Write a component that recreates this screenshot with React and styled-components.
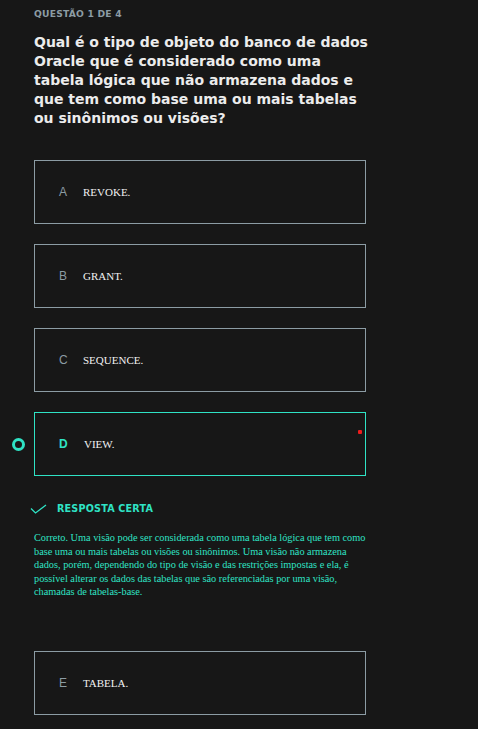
import React from 'react'
import styled, { createGlobalStyle } from 'styled-components'

const teal = '#2fe3c5'
const muted = '#8c9ca4'

const GlobalStyle = createGlobalStyle`
  html, body {
    margin: 0;
    padding: 0;
    background: #171717;
  }
  body {
    font-family: "DejaVu Sans", "Liberation Sans", sans-serif;
  }
`

const Page = styled.div`
  width: 478px;
  min-height: 729px;
  background: #171717;
  padding: 7px 0 0 34px;
  box-sizing: border-box;
`

const Counter = styled.div`
  font-size: 9.2px;
  font-weight: 600;
  color: ${muted};
  letter-spacing: 0.2px;
  line-height: 13px;
`

const Question = styled.h1`
  margin: 13px 0 0;
  font-size: 14px;
  line-height: 19px;
  font-weight: 700;
  color: #ececec;
`

const Options = styled.div`
  display: flex;
  flex-direction: column;
  gap: 20px;
  margin-top: ${(p) => p.$top}px;
  width: 332px;
`

const OptionBox = styled.div`
  position: relative;
  height: 64px;
  box-sizing: border-box;
  border: 1px solid ${(p) => (p.$selected ? teal : muted)};
  display: flex;
  align-items: center;
  padding-left: 24px;
`

const Letter = styled.span`
  width: 24px;
  font-family: "Liberation Sans", Arial, sans-serif;
  font-size: 12px;
  font-weight: ${(p) => (p.$selected ? 700 : 400)};
  color: ${(p) => (p.$selected ? teal : muted)};
  margin-right: ${(p) => (p.$selected ? 1 : 0)}px;
`

const OptionText = styled.span`
  font-family: "Liberation Serif", "Times New Roman", serif;
  font-size: 11px;
  color: #f2f2f2;
`

const Radio = styled.span`
  position: absolute;
  left: -23px;
  top: 50%;
  width: 13px;
  height: 13px;
  margin-top: -6px;
  box-sizing: border-box;
  border-radius: 50%;
  border: 3.5px solid ${teal};
`

const RedDot = styled.span`
  position: absolute;
  right: 3px;
  top: 17px;
  width: 4px;
  height: 4px;
  border-radius: 1px;
  background: #ee1c1c;
`

const Feedback = styled.div`
  margin-top: 27px;
  width: 332px;
`

const FeedbackHead = styled.div`
  display: flex;
  align-items: center;
  gap: 10px;
  margin-left: -4px;
  font-size: 9.6px;
  font-weight: 700;
  letter-spacing: 0.2px;
  color: ${teal};
`

const Explanation = styled.p`
  margin: 17px 0 0;
  font-family: "Liberation Serif", "Times New Roman", serif;
  font-size: 10.3px;
  line-height: 13.6px;
  color: ${teal};
`

const Check = () => (
  <svg width="17" height="10" viewBox="0 0 17 10" fill="none">
    <path d="M1 4.5 L5.5 9 L16 1" stroke={teal} strokeWidth="1.3" />
  </svg>
)

const options = [
  { letter: 'A', text: 'REVOKE.' },
  { letter: 'B', text: 'GRANT.' },
  { letter: 'C', text: 'SEQUENCE.' },
  { letter: 'D', text: 'VIEW.', selected: true },
]

const Option = ({ letter, text, selected }) => (
  <OptionBox $selected={selected}>
    {selected && <Radio />}
    <Letter $selected={selected}>{letter}</Letter>
    <OptionText>{text}</OptionText>
    {selected && <RedDot />}
  </OptionBox>
)

export default function App() {
  return (
    <Page>
      <GlobalStyle />
      <Counter>QUESTÃO 1 DE 4</Counter>
      <Question>
        Qual é o tipo de objeto do banco de dados
        <br />
        Oracle que é considerado como uma
        <br />
        tabela lógica que não armazena dados e
        <br />
        que tem como base uma ou mais tabelas
        <br />
        ou sinônimos ou visões?
      </Question>
      <Options $top={32}>
        {options.map((o) => (
          <Option key={o.letter} {...o} />
        ))}
      </Options>
      <Feedback>
        <FeedbackHead>
          <Check />
          RESPOSTA CERTA
        </FeedbackHead>
        <Explanation>
          Correto. Uma visão pode ser considerada como uma tabela lógica que tem como base uma ou
          mais tabelas ou visões ou sinônimos. Uma visão não armazena dados, porém, dependendo do
          tipo de visão e das restrições impostas e ela, é possível alterar os dados das tabelas que
          são referenciadas por uma visão, chamadas de tabelas-base.
        </Explanation>
      </Feedback>
      <Options $top={52}>
        <Option letter="E" text="TABELA." />
      </Options>
    </Page>
  )
}
